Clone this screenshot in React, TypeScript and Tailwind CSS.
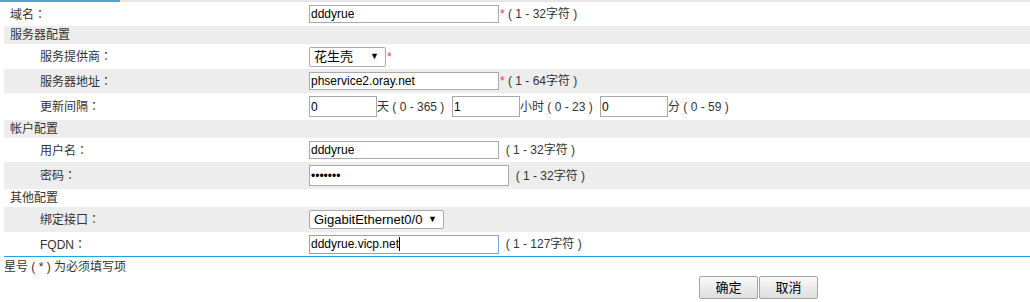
import React from "react";

type Row = {
  label: string;
  sub?: boolean;
  h: string;
  content?: React.ReactNode;
};

const font = { fontFamily: '"Liberation Sans", "Noto Sans CJK SC", Arial, sans-serif' };

function Star() {
  return <span className="ml-[1px] text-[#ff3366]">*</span>;
}

function Hint({ children }: { children: React.ReactNode }) {
  return <span className="whitespace-pre text-[#333]">{children}</span>;
}

function TextBox({
  value,
  w,
  h,
  type = "text",
}: {
  value: string;
  w: string;
  h: string;
  type?: string;
}) {
  return (
    <input
      readOnly
      type={type}
      value={value}
      className={`${w} ${h} border border-[#a9a9a9] bg-white px-[1px] text-[12px] text-black outline-none`}
      style={font}
    />
  );
}

function SelectBox({ value, w, h }: { value: string; w: string; h: string }) {
  return (
    <div
      className={`${w} ${h} flex items-center justify-between rounded-[2px] border border-[#a9a9a9] bg-white pl-[4px] pr-[6px] text-[13px] text-black`}
    >
      <span>{value}</span>
      <span className="text-[9px] leading-none">▼</span>
    </div>
  );
}

function Label({ text }: { text: string }) {
  if (!text.endsWith("：")) return <>{text}</>;
  return (
    <>
      {text.slice(0, -1)}
      <span className="font-['Noto_Sans_CJK_JP',sans-serif]">：</span>
    </>
  );
}

export default function App() {
  const rows: Row[] = [
    {
      label: "域名：",
      h: "h-[24px]",
      content: (
        <>
          <TextBox value="dddyrue" w="w-[190px]" h="h-[18px]" />
          <Star />
          <Hint> ( 1 - 32字符 )</Hint>
        </>
      ),
    },
    { label: "服务器配置", h: "h-[18px]" },
    {
      label: "服务提供商：",
      sub: true,
      h: "h-[25px]",
      content: (
        <>
          <SelectBox value="花生壳" w="w-[77px]" h="h-[20px]" />
          <Star />
        </>
      ),
    },
    {
      label: "服务器地址：",
      sub: true,
      h: "h-[24px]",
      content: (
        <>
          <TextBox value="phservice2.oray.net" w="w-[190px]" h="h-[18px]" />
          <Star />
          <Hint> ( 1 - 64字符 )</Hint>
        </>
      ),
    },
    {
      label: "更新间隔：",
      sub: true,
      h: "h-[27px]",
      content: (
        <>
          <TextBox value="0" w="w-[68px]" h="h-[21px]" />
          <span className="w-[75px]">天 ( 0 - 365 )</span>
          <TextBox value="1" w="w-[68px]" h="h-[21px]" />
          <span className="w-[80px]">小时 ( 0 - 23 )</span>
          <TextBox value="0" w="w-[68px]" h="h-[21px]" />
          <span>分 ( 0 - 59 )</span>
        </>
      ),
    },
    { label: "帐户配置", h: "h-[18px]" },
    {
      label: "用户名：",
      sub: true,
      h: "h-[24px]",
      content: (
        <>
          <TextBox value="dddyrue" w="w-[190px]" h="h-[18px]" />
          <Hint>  ( 1 - 32字符 )</Hint>
        </>
      ),
    },
    {
      label: "密码：",
      sub: true,
      h: "h-[27px]",
      content: (
        <>
          <TextBox value="1234567" type="password" w="w-[200px]" h="h-[21px]" />
          <Hint>  ( 1 - 32字符 )</Hint>
        </>
      ),
    },
    { label: "其他配置", h: "h-[18px]" },
    {
      label: "绑定接口：",
      sub: true,
      h: "h-[25px]",
      content: <SelectBox value="GigabitEthernet0/0" w="w-[135px]" h="h-[19px]" />,
    },
    {
      label: "FQDN：",
      sub: true,
      h: "h-[24px]",
      content: (
        <>
          <div className="flex h-[19px] w-[190px] items-center border border-[#7aa7d9] bg-white px-[1px] text-[12px] text-black">
            <span>dddyrue.vicp.net</span>
            <span className="h-[14px] w-[1px] bg-black" />
          </div>
          <Hint>  ( 1 - 127字符 )</Hint>
        </>
      ),
    },
  ];

  return (
    <div className="h-[302px] w-[1030px] bg-white text-[12px] text-[#333]" style={font}>
      <div className="flex h-[2px]">
        <div className="w-[120px] bg-[#4ba3d8]" />
        <div className="flex-1 bg-[#e6e6e6]" />
      </div>
      <div className="pl-[4px]">
        {rows.map((r, i) => (
          <div
            key={r.label}
            className={`flex items-center ${r.h} ${i % 2 === 1 ? "bg-[#ecedec]" : "bg-white"}`}
          >
            <div className={`w-[305px] shrink-0 ${r.sub ? "pl-[36px]" : "pl-[6px]"}`}>
              <Label text={r.label} />
            </div>
            <div className="flex items-center">{r.content}</div>
          </div>
        ))}
        <div className="h-[1px] bg-[#1aa3e8]" />
        <div className="flex h-[19px] items-center">星号 ( * ) 为必须填写项</div>
        <div className="flex gap-[1px] pl-[695px]">
          <button className="h-[23px] w-[59px] rounded-[2px] border border-[#a5a5a5] bg-gradient-to-b from-[#fafafa] to-[#dedede] text-[13px] text-black">
            确定
          </button>
          <button className="h-[23px] w-[59px] rounded-[2px] border border-[#a5a5a5] bg-gradient-to-b from-[#fafafa] to-[#dedede] text-[13px] text-black">
            取消
          </button>
        </div>
      </div>
    </div>
  );
}
